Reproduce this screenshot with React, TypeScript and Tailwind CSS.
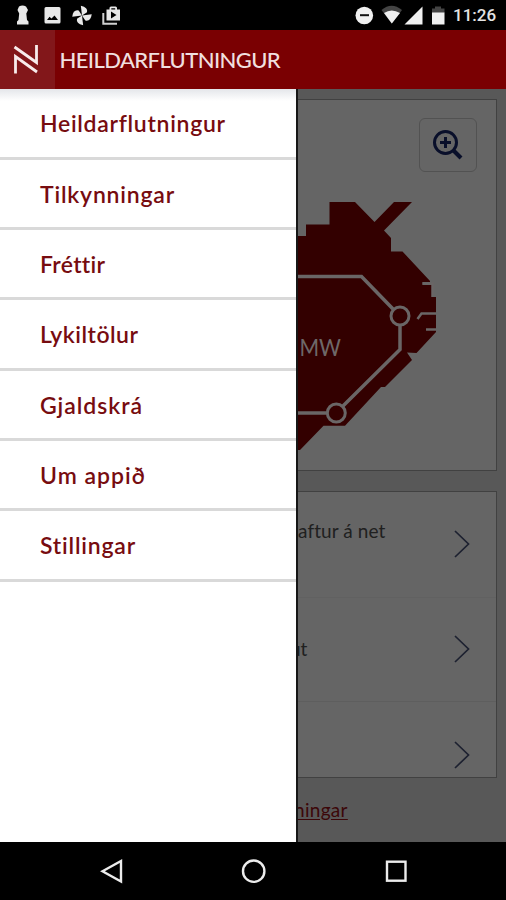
import type { ReactNode } from 'react'

const menuItems = [
  { label: 'Heildarflutningur', style: 'tracking-[0.7px]' },
  { label: 'Tilkynningar', style: 'tracking-[0.8px]' },
  { label: 'Fréttir', style: 'tracking-[0.3px]' },
  { label: 'Lykiltölur', style: 'tracking-[0.5px]' },
  { label: 'Gjaldskrá', style: 'tracking-[0.95px]' },
  { label: 'Um appið', style: 'tracking-[1px]' },
  { label: 'Stillingar', style: 'tracking-[0.8px]' },
]

function StatusBar() {
  return (
    <div className="h-[30px] shrink-0 bg-black flex items-center justify-between">
      <svg width="130" height="30" viewBox="0 0 130 30" fill="#e8e8e8">
        <path d="M19 6.5 Q22.5 4.5 26 6.5 L28 10 L26.3 13.5 L27 20 L28.5 21.5 V24.5 H17 V21.5 L18.500 20 L19.200 13.5 L17.5 10 Z" />
        <path fillRule="evenodd" d="M46 7 H59 Q60.5 7 60.5 8.5 V22 Q60.5 23.5 59 23.5 H46 Q44.5 23.5 44.5 22 V8.5 Q44.5 7 46 7 Z M47 20 H58 L54.5 15.5 L51.5 18.5 L49.5 16.8 Z" />
        <g transform="rotate(8 82 15.5)">
          <path d="M82 15.500 L79.500 6 Q87 6.500 86.5 11.500 Z" />
          <path d="M82 15.500 L91.5 13 Q91.500 20.5 86 20 Z" />
          <path d="M82 15.500 L84.500 25 Q77 24.500 77.5 19.500 Z" />
          <path d="M82 15.500 L72.5 18 Q72.500 10.5 78 11 Z" />
        </g>
        <path fillRule="evenodd" d="M106.500 9.500 H109.5 V8 Q109.5 6.500 111 6.500 H115.5 Q117 6.500 117 8 V9.500 H120 V20.5 H106.5 Z M111.300 9.500 H115.200 V8.3 H111.300 Z M111 11.500 V18.5 L116.5 15 Z" />
        <path d="M103.300 13 V23.700 H117" fill="none" stroke="#cfcfcf" strokeWidth="2" />
      </svg>
      <div className="flex items-center">
        <svg width="100" height="30" viewBox="350 0 100 30" fill="#f0f0f0">
          <circle cx="364.3" cy="15.5" r="8.8" />
          <rect x="360" y="14.2" width="9" height="2" fill="#111" />
          <path d="M381.5 10 Q391.5 1.5 402 10 L391.8 23.5 Z" fill="#444" />
          <path d="M384 13 Q391.5 8 400 13 L391.8 23.5 Z" />
          <path d="M422.5 6.5 V24.5 H404.5 Z" />
          <path d="M432 8.5 H435 V6.5 H441 V8.5 H444.5 V13 H432 Z" fill="#444" />
          <path d="M432 12.5 H444.5 V24.5 H432 Z" />
        </svg>
        <span className="w-14 pl-[3px] text-[17px] font-medium leading-[30px] text-[#e4e4e4] font-[Roboto,sans-serif] whitespace-nowrap">11:26</span>
      </div>
    </div>
  )
}

function Header() {
  return (
    <header className="h-[58.5px] shrink-0 bg-[#7a0002] flex items-center">
      <div className="w-[54.5px] h-full bg-[#82171a]">
        <svg width="54" height="58" viewBox="0 30 54 58" fill="none" stroke="#f8ecec" strokeWidth="2.8">
          <path d="M15.5 73.5 V56.5 L37 72" />
          <path d="M36.5 45 V62.500 L14.5 47" />
        </svg>
      </div>
      <h1 className="pl-[5px] text-[22px] font-medium text-[#f0dfdf] tracking-[-0.6px] whitespace-nowrap">HEILDARFLUTNINGUR</h1>
    </header>
  )
}

function Drawer() {
  return (
    <nav className="w-[298px] shrink-0 bg-white border-r-2 border-[#171717]">
      {/* soft shadow under the toolbar */}
      <div className="h-0">
        <div className="h-3 bg-linear-to-b from-[#e4e6ea] to-white" />
      </div>
      <ul className="pt-[1px]">
        {menuItems.map((item) => (
          <li key={item.label} className="relative h-[70.3px] flex items-center pl-10 pt-[1px] border-b-3 border-[#d9d9d9]">
            <span className={`text-[23px] font-semibold text-[#770c10] whitespace-nowrap ${item.style}`}>{item.label}</span>
          </li>
        ))}
      </ul>
    </nav>
  )
}

function GridMap() {
  return (
    <svg width="198" height="298" viewBox="298 172 198 298" className="block">
      <path
        fill="#330000"
        d="M298 236 H306 V224.5 H329.5 V202 H355 L374.5 222 L394 202 H412 L384 230.5 L391 238 V251.5 H402.5 L430 281 V282 H422.5 V285 H432 V297 H436 V332 L416.500 353 L407 352.5 L412 360 L385 387 H381 L345 425.7 H323.5 L300 450 H298 Z"
      />
      <g fill="none" stroke="#6a6666">
        <path d="M422.5 283.5 H432.5 V297" strokeWidth="2.5" />
        <path d="M436 313.5 H421.5 L417.5 319" strokeWidth="2.5" />
        <path d="M426 329.5 H436" strokeWidth="2.5" />
        <path d="M298 276.5 H361.5 L393 309 M400 326 V349.5 L343 406 M326 413 H298" strokeWidth="3.5" />
        <circle cx="400" cy="316" r="9" strokeWidth="3" />
        <circle cx="336.3" cy="413" r="9" strokeWidth="3" />
      </g>
      <text x="299.5" y="355.5" fontSize="24" fill="#6e6868" textLength="41.5" lengthAdjust="spacingAndGlyphs">MW</text>
    </svg>
  )
}

function NewsRow({ children, className }: { children?: ReactNode; className: string }) {
  return (
    <div className={`flex justify-between pr-[26px] ${className}`}>
      <div className="text-[19px] leading-6 text-[#202020] whitespace-nowrap">{children}</div>
      <svg width="16" height="28" viewBox="0 0 16 28" fill="none" stroke="#1d2130" strokeWidth="1.7" className="mt-[11px]">
        <path d="M1 1 L14.5 14 L1 27" />
      </svg>
    </div>
  )
}

function Content() {
  return (
    <main className="flex-1 min-w-0 overflow-hidden bg-[#585858] pr-[9.5px] pt-[10.5px]">
      <section className="h-[372px] bg-[#656565] border border-l-0 border-[#414141] pt-[18px]">
        <div className="flex justify-end pr-[19px]">
          <button className="w-[58px] h-[54px] rounded-md border border-[#525252] flex items-center justify-center" aria-label="Stækka">
            <svg width="30" height="30" viewBox="0 0 30 30" fill="none" stroke="#090f2a">
              <circle cx="12.5" cy="12.5" r="11" strokeWidth="3" />
              <path d="M12.5 7 V18 M7 12.5 H18" strokeWidth="3" />
              <path d="M20 20 L28 28" strokeWidth="4" />
            </svg>
          </button>
        </div>
        <GridMap />
      </section>

      <section className="mt-5 h-[287px] overflow-hidden bg-[#656565] border border-l-0 border-[#414141]">
        <NewsRow className="h-[106px] pt-[27px] border-b border-[#616161]">
          <span className="tracking-[0.1px]">aftur á net</span>
        </NewsRow>
        <NewsRow className="h-[104px] pt-[26px] border-b border-[#5e5e5e]">
          <span className="block -ml-2 pt-[13px]">út</span>
        </NewsRow>
        <NewsRow className="h-[76px] pt-[28px]" />
      </section>

      <a className="block mt-5 -ml-1 text-[19px] leading-6 tracking-[0.3px] text-[#3c0709] underline underline-offset-2 whitespace-nowrap">ningar</a>
    </main>
  )
}

function NavBar() {
  return (
    <div className="h-[58px] shrink-0 bg-black flex justify-center">
      <svg width="506" height="58" viewBox="0 842 506 58" fill="none" stroke="#ececec" strokeWidth="2.4">
        <path d="M102.5 871.2 L121 861 V881.5 Z" />
        <circle cx="253.7" cy="871.2" r="10.7" />
        <rect x="387" y="861.7" width="18.5" height="19" />
      </svg>
    </div>
  )
}

export default function App() {
  return (
    <div className="w-[506px] h-[900px] flex flex-col overflow-hidden bg-black font-[Lato,'Open_Sans',sans-serif]">
      <StatusBar />
      <Header />
      <div className="flex-1 min-h-0 flex">
        <Drawer />
        <Content />
      </div>
      <NavBar />
    </div>
  )
}
